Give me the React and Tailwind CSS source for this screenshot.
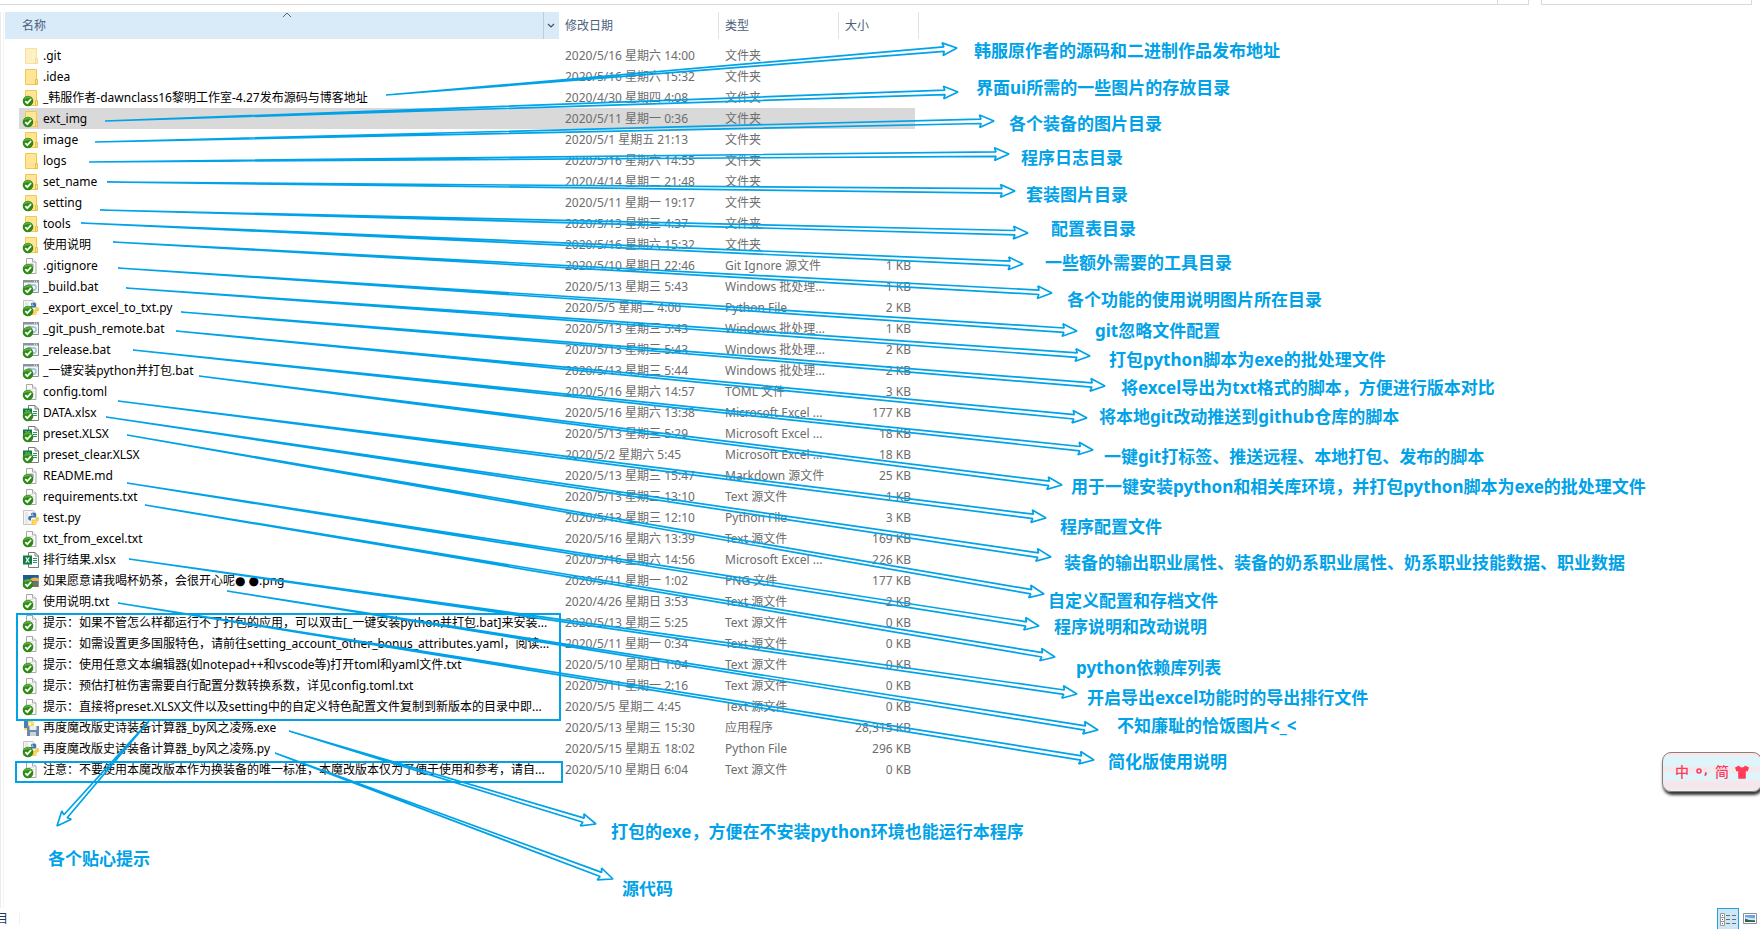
import React from "react";

const FILES = [
  ["folderFaded", ".git", "2020/5/16 星期六 14:00", "文件夹", "", false],
  ["folder", ".idea", "2020/5/16 星期六 15:32", "文件夹", "", false],
  ["folder", "_韩服作者-dawnclass16黎明工作室-4.27发布源码与博客地址", "2020/4/30 星期四 4:08", "文件夹", "", true],
  ["folder", "ext_img", "2020/5/11 星期一 0:36", "文件夹", "", true],
  ["folder", "image", "2020/5/1 星期五 21:13", "文件夹", "", true],
  ["folder", "logs", "2020/5/16 星期六 14:55", "文件夹", "", false],
  ["folder", "set_name", "2020/4/14 星期二 21:48", "文件夹", "", true],
  ["folder", "setting", "2020/5/11 星期一 19:17", "文件夹", "", true],
  ["folder", "tools", "2020/5/13 星期三 4:37", "文件夹", "", true],
  ["folder", "使用说明", "2020/5/16 星期六 15:32", "文件夹", "", true],
  ["code", ".gitignore", "2020/5/10 星期日 22:46", "Git Ignore 源文件", "1 KB", true],
  ["bat", "_build.bat", "2020/5/13 星期三 5:43", "Windows 批处理...", "1 KB", true],
  ["py", "_export_excel_to_txt.py", "2020/5/5 星期二 4:00", "Python File", "2 KB", true],
  ["bat", "_git_push_remote.bat", "2020/5/13 星期三 5:43", "Windows 批处理...", "1 KB", true],
  ["bat", "_release.bat", "2020/5/13 星期三 5:43", "Windows 批处理...", "2 KB", true],
  ["bat", "_一键安装python并打包.bat", "2020/5/13 星期三 5:44", "Windows 批处理...", "2 KB", true],
  ["doc", "config.toml", "2020/5/16 星期六 14:57", "TOML 文件", "3 KB", true],
  ["xlsx", "DATA.xlsx", "2020/5/16 星期六 13:38", "Microsoft Excel ...", "177 KB", true],
  ["xlsx", "preset.XLSX", "2020/5/13 星期三 5:29", "Microsoft Excel ...", "18 KB", true],
  ["xlsx", "preset_clear.XLSX", "2020/5/2 星期六 5:45", "Microsoft Excel ...", "18 KB", true],
  ["code", "README.md", "2020/5/13 星期三 15:47", "Markdown 源文件", "25 KB", true],
  ["doc", "requirements.txt", "2020/5/13 星期三 13:10", "Text 源文件", "1 KB", true],
  ["py", "test.py", "2020/5/13 星期三 12:10", "Python File", "3 KB", false],
  ["doc", "txt_from_excel.txt", "2020/5/16 星期六 13:39", "Text 源文件", "169 KB", true],
  ["xlsx", "排行结果.xlsx", "2020/5/16 星期六 14:56", "Microsoft Excel ...", "226 KB", false],
  ["png", "如果愿意请我喝杯奶茶，会很开心呢● ●.png", "2020/5/11 星期一 1:02", "PNG 文件", "177 KB", true],
  ["doc", "使用说明.txt", "2020/4/26 星期日 3:53", "Text 源文件", "2 KB", true],
  ["doc", "提示：如果不管怎么样都运行不了打包的应用，可以双击[_一键安装python并打包.bat]来安装...", "2020/5/13 星期三 5:25", "Text 源文件", "0 KB", true],
  ["doc", "提示：如需设置更多国服特色，请前往setting_account_other_bonus_attributes.yaml，阅读...", "2020/5/11 星期一 0:34", "Text 源文件", "0 KB", true],
  ["doc", "提示：使用任意文本编辑器(如notepad++和vscode等)打开toml和yaml文件.txt", "2020/5/10 星期日 1:04", "Text 源文件", "0 KB", true],
  ["doc", "提示：预估打桩伤害需要自行配置分数转换系数，详见config.toml.txt", "2020/5/11 星期一 2:16", "Text 源文件", "0 KB", true],
  ["doc", "提示：直接将preset.XLSX文件以及setting中的自定义特色配置文件复制到新版本的目录中即...", "2020/5/5 星期二 4:45", "Text 源文件", "0 KB", true],
  ["exe", "再度魔改版史诗装备计算器_by风之凌殇.exe", "2020/5/13 星期三 15:30", "应用程序", "28,315 KB", false],
  ["py", "再度魔改版史诗装备计算器_by风之凌殇.py", "2020/5/15 星期五 18:02", "Python File", "296 KB", true],
  ["doc", "注意：不要使用本魔改版本作为换装备的唯一标准，本魔改版本仅为了便于使用和参考，请自...", "2020/5/10 星期日 6:04", "Text 源文件", "0 KB", true],
];

const SELECTED = "ext_img";

// [tail x, tail y, tip x, tip y]
const ARROWS = [
  [386, 95, 957, 48],
  [105, 121, 958, 92],
  [95, 142, 994, 121],
  [89, 162, 1009, 154],
  [107, 182, 1015, 191],
  [100, 210, 1028, 233],
  [81, 223, 1023, 264],
  [113, 242, 1052, 293],
  [118, 268, 1077, 331],
  [126, 288, 1090, 356],
  [181, 312, 1105, 386],
  [176, 331, 1087, 418],
  [133, 350, 1093, 450],
  [199, 376, 1062, 485],
  [118, 401, 1046, 518],
  [106, 417, 1051, 557],
  [127, 435, 1044, 594],
  [127, 483, 1039, 626],
  [145, 505, 1055, 657],
  [129, 559, 1077, 694],
  [227, 591, 1098, 730],
  [118, 603, 1094, 760],
  [289, 731, 596, 824],
  [275, 753, 613, 879],
  [149, 721, 57, 826],
];

// [left, vertical centre, text]
const NOTES = [
  [974, 51, "韩服原作者的源码和二进制作品发布地址"],
  [976, 88, "界面ui所需的一些图片的存放目录"],
  [1009, 124, "各个装备的图片目录"],
  [1021, 158, "程序日志目录"],
  [1026, 195, "套装图片目录"],
  [1051, 229, "配置表目录"],
  [1045, 263, "一些额外需要的工具目录"],
  [1067, 300, "各个功能的使用说明图片所在目录"],
  [1095, 331, "git忽略文件配置"],
  [1109, 360, "打包python脚本为exe的批处理文件"],
  [1121, 388, "将excel导出为txt格式的脚本，方便进行版本对比"],
  [1099, 417, "将本地git改动推送到github仓库的脚本"],
  [1104, 457, "一键git打标签、推送远程、本地打包、发布的脚本"],
  [1071, 487, "用于一键安装python和相关库环境，并打包python脚本为exe的批处理文件"],
  [1060, 527, "程序配置文件"],
  [1064, 563, "装备的输出职业属性、装备的奶系职业属性、奶系职业技能数据、职业数据"],
  [1048, 601, "自定义配置和存档文件"],
  [1054, 627, "程序说明和改动说明"],
  [1076, 668, "python依赖库列表"],
  [1087, 698, "开启导出excel功能时的导出排行文件"],
  [1117, 726, "不知廉耻的恰饭图片<_<"],
  [1108, 762, "简化版使用说明"],
  [611, 832, "打包的exe，方便在不安装python环境也能运行本程序"],
  [622, 889, "源代码"],
  [48, 859, "各个贴心提示"],
];

function arrowPath([x1, y1, x2, y2]) {
  const length = Math.hypot(x2 - x1, y2 - y1);
  const ux = (x2 - x1) / length;
  const uy = (y2 - y1) / length;
  const at = (back, side) =>
    `${(x2 - ux * back - uy * side).toFixed(1)} ${(y2 - uy * back + ux * side).toFixed(1)}`;
  return `M${x1} ${y1}L${at(13, 2.2)}L${at(14.5, 6.3)}L${x2} ${y2}L${at(14.5, -6.3)}L${at(13, -2.2)}Z`;
}

function Page() {
  return (
    <>
      <path d="M3.5.5h6l3.500 3.500V15.500H3.500z" fill="#fbfbfb" stroke="#a9a9a9" />
      <path d="M9.500.5V4H13" fill="#fff" stroke="#a9a9a9" />
      <path d="M5.500 5.500h5M5.500 7.500h5.500M5.500 9.500h5.500" stroke="#dcdcdc" />
    </>
  );
}

function Python() {
  return (
    <>
      <path d="M10.500 2.500c-2 0-2.500.8-2.500 1.800V5.500h3v.6H6.800c-1 0-1.600.9-1.600 2.200s.6 2.200 1.600 2.200H8V9c0-1 .8-1.500 1.500-1.500h2.200c.8 0 1.300-.6 1.300-1.300V4.300c0-1-.8-1.800-2.500-1.800z" fill="#3b75a8" />
      <circle cx="9.300" cy="4.100" r=".6" fill="#fff" />
      <path d="M11 15c2 0 2.500-.8 2.500-1.800V12h-3v-.6h4c1 0 1.500-.9 1.500-2.200S15.500 7 14.500 7h-1v1c0 1-.8 1.500-1.500 1.500H9.800c-.8 0-1.300.6-1.300 1.300v2.400c0 1 .8 1.800 2.500 1.800z" fill="#ffce3d" />
      <circle cx="12.200" cy="13.400" r=".6" fill="#fff" />
    </>
  );
}

function FileIcon({ kind, synced }) {
  return (
    <svg viewBox="0 0 16 16" className="h-4 w-4 shrink-0 overflow-visible" fill="none" aria-hidden="true">
      {(kind === "folder" || kind === "folderFaded") && (
        <g opacity={kind === "folderFaded" ? 0.55 : 1}>
          <path d="M2.500.5h11v9.500l.8.5v5H2.500z" fill="#ffe594" stroke="#efc94f" />
          <path d="M12.500 15.500v-5h1.800v5z" fill="#ffe9a6" stroke="#e9bf3e" />
        </g>
      )}
      {kind === "doc" && <Page />}
      {kind === "code" && (
        <>
          <Page />
          <circle cx="8.500" cy="8" r="2.300" fill="#8b9db3" />
          <circle cx="8.500" cy="8" r=".9" fill="#fff" />
        </>
      )}
      {kind === "bat" && (
        <>
          <path d="M.5 1.500h15v12H.5z" fill="#f4f7f9" stroke="#8b9299" />
          <path d="M0 1h16v2.500H0z" fill="#8b9299" />
          <path d="M11 2.200h1M13 2.200h1" stroke="#fff" />
          <circle cx="10.500" cy="8.500" r="2.600" stroke="#a8c4dc" strokeWidth="1.600" />
          <circle cx="6.500" cy="7.500" r="2.200" stroke="#9aa7b2" strokeWidth="1.200" />
        </>
      )}
      {kind === "py" && (
        <>
          <path d="M.5.5h9.500l3 3V14.500H.5z" fill="#f6f6f6" stroke="#c4c4c4" />
          <path d="M2 3h3M2 5h3M2 7h3M2 9h3M2 11h3M2 13h3" stroke="#d9d9d9" />
          <Python />
        </>
      )}
      {kind === "xlsx" && (
        <>
          <path d="M5.500.5h6.500l3.500 3.500V15.500h-10z" fill="#fff" stroke="#7c7c7c" />
          <path d="M12 .5V4h3.500" stroke="#7c7c7c" />
          <path d="M10 6.500h4M10 8.500h4M10 10.500h4" stroke="#1f9a5c" />
          <path d="M0 3.500h9v9H0z" fill="#127a43" />
          <path d="M2.800 5.500l3.400 5M6.200 5.500l-3.400 5" stroke="#fff" strokeWidth="1.300" />
        </>
      )}
      {kind === "png" && (
        <>
          <path d="M0 2h15.500v12H0z" fill="#2c6fa8" />
          <path d="M0 2h15.500v4H0z" fill="#1f5a94" />
          <path d="M6 7c3-3 6-3 9.500-2v3H6z" fill="#e7b154" />
          <path d="M3 14l5-5 7.500-1v6z" fill="#77706a" />
        </>
      )}
      {kind === "exe" && (
        <>
          <path d="M1 .5h8l2 2V10H1z" fill="#ffd75a" />
          <path d="M1 .5h4V8H1z" fill="#4b7fb0" />
          <circle cx="7" cy="4" r="1.200" fill="#fff" />
          <path d="M4 6h12v10H4z" fill="#6d89a8" />
          <path d="M6.500 6h7v4h-7z" fill="#e8eef4" />
          <path d="M7 12h6v4H7z" fill="#c9d3dd" />
        </>
      )}
      {synced && (
        <>
          <circle cx="5" cy="11" r="5.300" fill="#2d8a14" />
          <path d="M.6 9.500a4.700 4.700 0 0 1 8.600-.8C6.500 8 3.300 8.200.6 9.500z" fill="#5bb03c" />
          <path d="M2.300 11.200l2 2 3.800-4.200" stroke="#fff" strokeWidth="1.800" />
        </>
      )}
    </svg>
  );
}

function HeaderCell({ label, active }) {
  return (
    <th scope="col" className="p-0 pb-[6px] text-left font-normal">
      <div
        className={
          active
            ? "relative flex h-[27px] bg-[#d9ebf9]"
            : "flex h-[27px] border-r border-[#e2e2e2]"
        }
      >
        <button
          type="button"
          className={active ? "flex-1 pl-[17px] text-left" : "flex-1 pl-[6px] text-left"}
        >
          {label}
        </button>
        {active && (
          <>
            <svg viewBox="0 0 10 6" className="absolute top-0 left-[277px] h-[6px] w-[10px]" aria-hidden="true">
              <path d="M1 5l4-4 4 4" fill="none" stroke="#5a6670" />
            </svg>
            <button
              type="button"
              aria-label="筛选名称"
              className="flex w-4 items-center border-l border-[#b9cddd] pl-[3px]"
            >
              <svg viewBox="0 0 8 6" className="h-[6px] w-2" aria-hidden="true">
                <path d="M1 1l3 3 3-3" fill="none" stroke="#444f5a" strokeWidth="1.200" />
              </svg>
            </button>
          </>
        )}
      </div>
    </th>
  );
}

function FileRow({ file }) {
  const [kind, name, date, type, size, synced] = file;
  const fill = name === SELECTED ? "bg-[#d9d9d9]" : "";
  const cell = `flex h-[21px] items-center ${fill}`;
  return (
    <tr className="text-[#6d6d6d]">
      <td className="p-0 pl-[14px]">
        <div className={`${cell} gap-1 pl-1 text-black`}>
          <FileIcon kind={kind} synced={synced} />
          <span>{name}</span>
        </div>
      </td>
      <td className="p-0">
        <div className={`${cell} pl-[6px]`}>{date}</div>
      </td>
      <td className="p-0">
        <div className={`${cell} pl-[6px]`}>{type}</div>
      </td>
      <td className="p-0 pr-1">
        <div className={`${cell} justify-end pr-1`}>{size}</div>
      </td>
    </tr>
  );
}

function Annotations() {
  return (
    <div className="pointer-events-none absolute inset-0 overflow-hidden">
      <svg className="absolute inset-0 h-full w-full" aria-hidden="true">
        <g fill="none" stroke="#00a2e8" strokeWidth="1.700" strokeLinejoin="bevel">
          {ARROWS.map((arrow, i) => (
            <path key={i} d={arrowPath(arrow)} />
          ))}
        </g>
        <g fill="none" stroke="#00a2e8" strokeWidth="2">
          <rect x="17" y="614" width="543" height="106" />
          <rect x="16" y="762" width="546" height="20" />
        </g>
      </svg>
      {NOTES.map(([left, top, text]) => (
        <p
          key={text}
          className="absolute -translate-y-1/2 text-[17px] leading-6 font-bold text-[#00a2e8]"
          style={{ left, top }}
        >
          {text}
        </p>
      ))}
    </div>
  );
}

function InputMethodBar() {
  return (
    <div className="absolute top-[752px] right-[-2px] flex h-10 w-[100px] items-center rounded-[9px] border border-[#8f7b76] bg-[linear-gradient(#fbe6e8_0%,#dcf6fc_16%,#dcf6fc_30%,#f9e5e8_42%,#dcf6fc_58%,#dcf6fc_66%,#f7e6e9_78%,#f7e6e9_88%,#e3f3f7_100%)] pl-3 text-[#ff3b59] shadow-[1px_3px_3px_#333]">
      <button type="button" className="w-[14px] text-[14px] leading-5 font-medium">中</button>
      <button type="button" aria-label="中文标点" className="ml-[7px] w-3">
        <svg viewBox="0 0 12 12" className="h-3 w-3" fill="none" stroke="currentColor" aria-hidden="true">
          <circle cx="3" cy="5" r="2" strokeWidth="1.600" />
          <path d="M9.200 6.500c1.200.3.900 2.200-.6 3" strokeWidth="1.800" />
        </svg>
      </button>
      <button type="button" className="ml-[7px] w-[14px] text-[14px] leading-5 font-medium">简</button>
      <button type="button" aria-label="皮肤" className="ml-[6px]">
        <svg viewBox="0 0 14 14" className="h-[14px] w-[14px]" fill="currentColor" aria-hidden="true">
          <path d="M4 .5c.8 2.600 5.200 2.600 6 0L14 2.500l-1.400 4-1.800-.4V13q0 .7-.7.7H4q-.8 0-.8-.7V6.100l-1.800.4L0 2.500z" />
        </svg>
      </button>
    </div>
  );
}

export default function App() {
  return (
    <main className="relative flex min-h-screen flex-col overflow-hidden bg-white font-['Noto_Sans','DejaVu_Sans','Noto_Sans_CJK_SC',sans-serif] text-[12px] leading-4 whitespace-nowrap">
      <div className="flex h-[5px] gap-3 pr-2">
        <div className="flex flex-1 justify-end border-r border-b border-[#d9d9d9]">
          <div className="w-[31px] border-l border-[#d9d9d9]" />
        </div>
        <div className="w-[211px] border-x border-b border-[#d9d9d9]" />
      </div>

      <div className="mt-[7px] flex flex-1 border-l border-[#ececec]">
        <div className="ml-[2px] w-[2px] border-l border-[#f3f3f3]" />
        <table className="h-fit w-[914px] table-fixed border-collapse">
          <colgroup>
            <col className="w-[554px]" />
            <col className="w-[160px]" />
            <col className="w-[120px]" />
            <col className="w-[80px]" />
          </colgroup>
          <thead>
            <tr className="text-[#4c607a]">
              <HeaderCell label="名称" active />
              <HeaderCell label="修改日期" />
              <HeaderCell label="类型" />
              <HeaderCell label="大小" />
            </tr>
          </thead>
          <tbody>
            {FILES.map((file) => (
              <FileRow key={file[1]} file={file} />
            ))}
          </tbody>
        </table>
      </div>

      <footer className="flex h-[21px] items-center justify-between">
        <div className="flex items-center gap-[11px]">
          <div className="flex w-2 justify-end overflow-hidden text-[#1e395b]">目</div>
          <div className="h-3 border-l border-[#f0f0f0]" />
        </div>
        <div className="flex items-center gap-1 pr-[3px]">
          <button
            type="button"
            aria-label="详细信息"
            className="flex h-[21px] w-[22px] items-center justify-center border border-b-0 border-[#26a0da] bg-[#cce8f6]"
          >
            <svg viewBox="0 0 16 13" className="h-[13px] w-4" fill="none" aria-hidden="true">
              <path d="M.5.5h4v12h-4zM.5 4.500h4M.5 8.500h4" fill="#fff" stroke="#9a9a9a" />
              <path d="M2 2h1v1H2zM2 6h1v1H2z" fill="#356aa0" />
              <path d="M2 10h1v1H2z" fill="#c23a2e" />
              <path d="M6 2.500h4M12 2.500h4M6 6.500h4M12 6.500h4M6 10.500h4M12 10.500h4" stroke="#6e6e6e" />
            </svg>
          </button>
          <button type="button" aria-label="大缩略图">
            <svg viewBox="0 0 14 11" className="h-[11px] w-[14px]" aria-hidden="true">
              <path d="M.5.5h13v10H.5z" fill="#fff" stroke="#8f8f8f" />
              <path d="M2 2h10v7H2z" fill="#6aa6e6" />
              <path d="M2 4.500c3-1 6 1.500 10 .5v2H2z" fill="#d5e8f8" />
              <path d="M2 5.500l4 1.500 6 .5V9H2z" fill="#2f6350" />
            </svg>
          </button>
        </div>
      </footer>

      <Annotations />
      <InputMethodBar />
    </main>
  );
}
